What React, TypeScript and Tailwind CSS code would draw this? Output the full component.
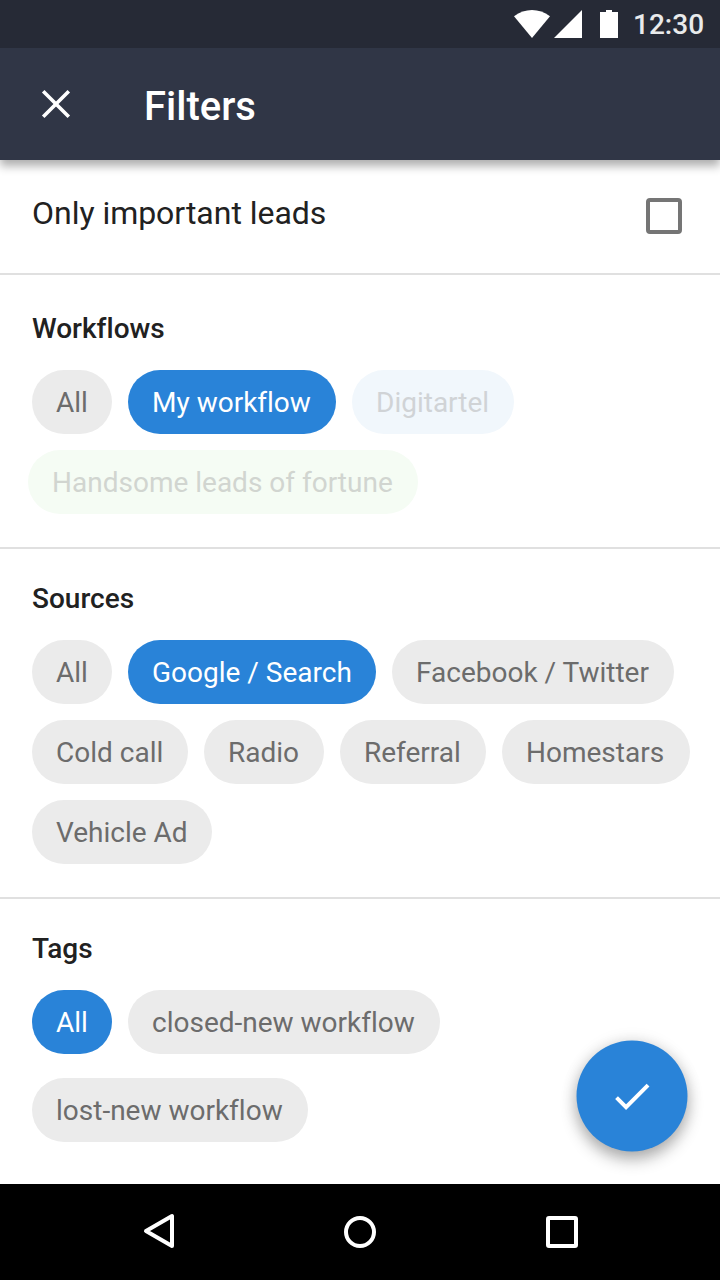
import type { ReactNode } from "react";

type Tone = "gray" | "active" | "blueFaded" | "greenFaded";

const tones: Record<Tone, string> = {
  gray: "bg-[#ebebeb] text-[#6c6c6c]",
  active: "bg-[#2983d8] text-white",
  blueFaded: "bg-[#f1f7fc] text-[#d0d3d6]",
  greenFaded: "bg-[#f5fcf4] text-[#d1d5d0]",
};

function Chip({ width, tone = "gray", children }: { width: string; tone?: Tone; children: ReactNode }) {
  return (
    <button
      className={`${width} ${tones[tone]} h-16 shrink-0 rounded-full pt-0.5 pl-6 text-left text-[28px] leading-[62px] whitespace-nowrap`}
    >
      {children}
    </button>
  );
}

function Heading({ children }: { children: ReactNode }) {
  return <h2 className="mb-[21px] text-[28px] leading-10 font-medium text-[#212121]">{children}</h2>;
}

function Row({ children }: { children: ReactNode }) {
  return <div className="flex gap-4">{children}</div>;
}

export default function App() {
  return (
    <div className="flex h-[1280px] w-[720px] flex-col overflow-hidden bg-white font-['Roboto',sans-serif] [font-variant-ligatures:none]">
      <div className="relative z-20 flex h-12 shrink-0 items-center bg-[#262a36] pl-[512px]">
        <svg width="112" height="48" viewBox="512 0 112 48" fill="#fff">
          <path d="M514 16.3C525 8 539 8 550 16.3L532 38Z" />
          <path d="M554 38L582 10V38Z" />
          <path d="M600 12H606V10H612V12H618V38H600Z" />
        </svg>
        <span className="mt-0.5 ml-[9px] text-[28px] leading-[48px] font-medium text-[#e9eaeb]">12:30</span>
      </div>

      <header className="z-10 flex h-28 shrink-0 items-center bg-[#303646] pl-10 shadow-[0_6px_9px_rgba(0,0,0,0.32)]">
        <svg width="32" height="32" viewBox="0 0 32 32" fill="none" stroke="#fff" strokeWidth="3.6">
          <path d="M3.2 3.2L28.8 28.8M28.8 3.2L3.2 28.8" />
        </svg>
        <h1 className="mt-1.5 ml-[72px] text-[40px] leading-[48px] font-medium text-white">Filters</h1>
      </header>

      <label className="flex h-[115px] shrink-0 items-start justify-between border-b-2 border-[#e0e0e0] pt-[33px] pr-[38px] pl-8">
        <span className="text-[32px] leading-10 tracking-[-0.03px] text-[#212121]">Only important leads</span>
        <span className="mt-[5px] h-9 w-9 rounded-[4px] border-4 border-[#757575]" />
      </label>

      <section className="flex h-[274px] shrink-0 flex-col border-b-2 border-[#e0e0e0] pt-[34px] pl-8">
        <Heading>Workflows</Heading>
        <div className="flex flex-col gap-4">
          <Row>
            <Chip width="w-[80px]">All</Chip>
            <Chip width="w-[208px]" tone="active">My workflow</Chip>
            <Chip width="w-[162px]" tone="blueFaded">Digitartel</Chip>
          </Row>
          <div className="-ml-1 flex">
            <Chip width="w-[390px]" tone="greenFaded">Handsome leads of fortune</Chip>
          </div>
        </div>
      </section>

      <section className="flex h-[350px] shrink-0 flex-col border-b-2 border-[#e0e0e0] pt-[30px] pl-8">
        <Heading>Sources</Heading>
        <div className="flex flex-col gap-4">
          <Row>
            <Chip width="w-[80px]">All</Chip>
            <Chip width="w-[248px]" tone="active">Google / Search</Chip>
            <Chip width="w-[282px]">Facebook / Twitter</Chip>
          </Row>
          <Row>
            <Chip width="w-[156px]">Cold call</Chip>
            <Chip width="w-[120px]">Radio</Chip>
            <Chip width="w-[146px]">Referral</Chip>
            <Chip width="w-[188px]">Homestars</Chip>
          </Row>
          <Row>
            <Chip width="w-[180px]">Vehicle Ad</Chip>
          </Row>
        </div>
      </section>

      <section className="relative flex h-[285px] shrink-0 flex-col pt-[30px] pl-8">
        <Heading>Tags</Heading>
        <div className="flex flex-col gap-6">
          <Row>
            <Chip width="w-[80px]" tone="active">All</Chip>
            <Chip width="w-[312px]">closed-new workflow</Chip>
          </Row>
          <Row>
            <Chip width="w-[276px]">lost-new workflow</Chip>
          </Row>
        </div>
        <button
          aria-label="Apply"
          className="absolute right-8 bottom-8 flex h-28 w-28 scale-[0.991] items-center justify-center rounded-full bg-[#2983d8] shadow-[0_8px_16px_rgba(0,0,0,0.3),0_0_16px_rgba(0,0,0,0.1)]"
        >
          <svg width="48" height="48" viewBox="0 0 48 48" fill="none" stroke="#fff" strokeWidth="4">
            <path d="M8.4 25.6L18 35.2L40.2 13" />
          </svg>
        </button>
      </section>

      <nav className="flex h-24 shrink-0 bg-black">
        <svg width="720" height="96" viewBox="0 0 720 96" fill="none" stroke="#fff" strokeWidth="4" strokeLinejoin="round">
          <path d="M146 47L172 32V62Z" />
          <circle cx="360" cy="48" r="14" />
          <rect x="548" y="34" width="28" height="28" rx="1" />
        </svg>
      </nav>
    </div>
  );
}
